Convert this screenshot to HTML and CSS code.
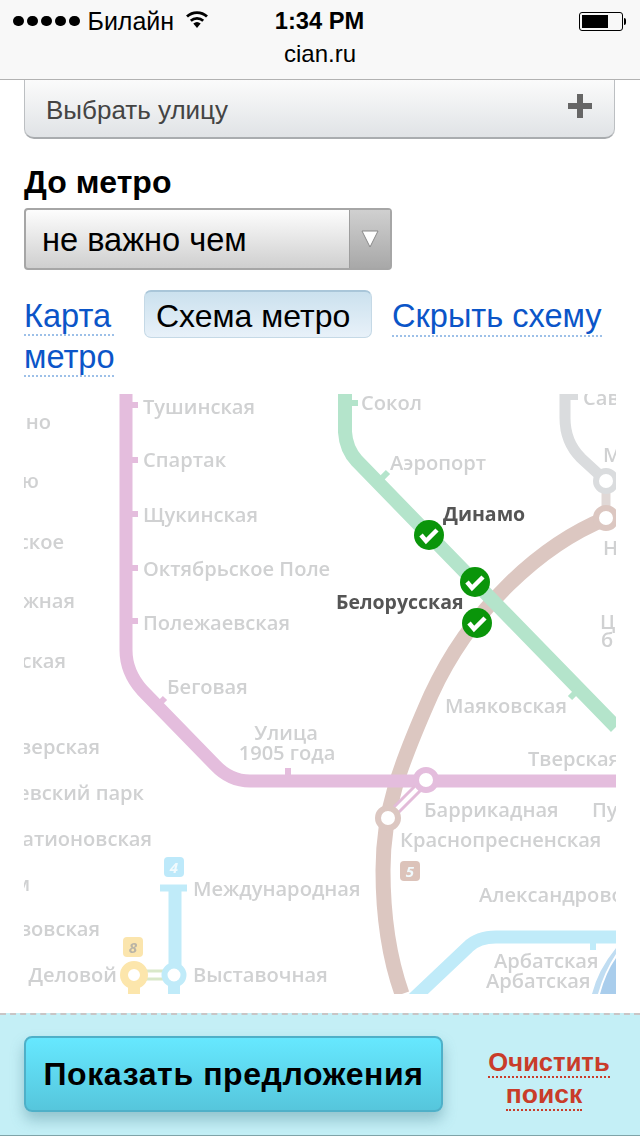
FILE: index.html
```html
<!DOCTYPE html>
<html lang="ru">
<head>
<meta charset="utf-8">
<title>cian.ru</title>
<link rel="stylesheet" href="styles.css">
</head>
<body>
<header class="browser">
  <div class="status">
    <div class="status-left">
      <span class="dots"><i></i><i></i><i></i><i></i><i></i></span>
      <span class="carrier">Билайн</span>
      <svg class="wifi" viewBox="0 0 24 18" width="24" height="18"><path d="M12 18 L8.3 13.6 A5.6 5.6 0 0 1 15.7 13.6Z" fill="#000"/><path d="M5.8 10.8 A9.4 9.4 0 0 1 18.2 10.8" fill="none" stroke="#000" stroke-width="2.8"/><path d="M2 6.6 A14.6 14.6 0 0 1 22 6.6" fill="none" stroke="#000" stroke-width="2.8"/></svg>
    </div>
    <div class="clock">1:34 PM</div>
    <div class="status-right">
      <span class="battery"><span class="battery-level"></span></span><span class="battery-nub"></span>
    </div>
  </div>
  <div class="domain">cian.ru</div>
</header>

<main class="content">
  <button class="street"><span class="street-text">Выбрать улицу</span>
    <svg class="plus" viewBox="0 0 24 24" width="24" height="24"><path d="M9 0h6v9h9v6h-9v9H9v-9H0V9h9z" fill="#666"/></svg>
  </button>

  <h2 class="label">До метро</h2>
  <div class="select">
    <span class="select-value">не важно чем</span>
    <span class="select-arrow"><svg viewBox="0 0 18 18" width="18" height="18"><path d="M1 1h16L9 17z" fill="#fff" stroke="#8a8a8a" stroke-width="1"/></svg></span>
  </div>

  <nav class="tabs">
    <a class="tab tab-map"><span class="dotted-line">Карта</span> <span class="dotted-line">метро</span></a>
    <span class="chip">Схема метро</span>
    <a class="tab tab-hide"><span class="dotted">Скрыть схему</span></a>
  </nav>

  <div class="map">
    <svg class="map-svg" viewBox="24 394 592 600" width="592" height="600">
      <g class="soft">
        <path class="ln brown" d="M607 518C540 545 470 610 431 695C400 765 383 810 383 870C383 920 390 960 402 994"/>
        <path class="ln pink" d="M126 394V650Q126 672 142 690L215 765Q230 781 250 781H616"/>
        <path class="tk pink" d="M126 405H138M126 460H138M126 514H138M126 568H138M126 621H138M155 708L165 698M288 781V768"/>
        <path class="ln green" d="M345 394V432Q346 449 357 461L616 727"/>
        <path class="tk green" d="M345 403H358M378 482L388 472M570 698L580 688"/>
        <path class="ln grey" d="M565 394V418Q565 442 581 458L606 481"/>
        <path class="tk grey" d="M565 397H578"/>
        <path class="ln sky" d="M412 1000L468 947Q478 937 496 937H616"/>
        <path class="tk sky" d="M593 937V950"/>
        <path class="ln sky" d="M175 888V965"/>
        <path class="tk sky thick" d="M160 888H187"/>
        <path class="arbat" d="M600 994Q606 972 616 958V994Z"/>
        <path class="arbat-light" d="M592 994Q598 970 616 948V954Q604 972 598 994Z"/>
        <path class="link-pale" d="M135 975H174"/>
        <path class="link-white" d="M135 975H174"/>
        <circle class="ring yellow" cx="134" cy="975" r="10"/>
        <path class="tail yellow" d="M134 985V994"/>
        <circle class="ring sky-ring" cx="174" cy="975" r="9.5"/>
        <path class="tail sky-tail" d="M174 985V994"/>
        <path class="link-grey" d="M606 481V518"/>
        <circle class="ring grey-ring" cx="606" cy="481" r="10"/>
        <circle class="ring brown-ring" cx="606" cy="518" r="10"/>
        <path class="link-brown" d="M426 780L388 818"/>
        <path class="link-white2" d="M426 780L388 818"/>
        <circle class="ring pink-ring" cx="426" cy="780" r="10"/>
        <circle class="ring brown-ring" cx="388" cy="818" r="10"/>
        <rect class="badge sky-f" x="164" y="857" width="20" height="20" rx="4"/>
        <rect class="badge yellow-f" x="123" y="937" width="20" height="20" rx="4"/>
        <rect class="badge brown-f" x="400" y="861" width="20" height="20" rx="4"/>
        <text class="num" x="174" y="873">4</text>
        <text class="num num-dark" x="133" y="953">8</text>
        <text class="num" x="410" y="877">5</text>

        <text class="st" x="143" y="414">Тушинская</text>
        <text class="st" x="143" y="467">Спартак</text>
        <text class="st" x="143" y="522">Щукинская</text>
        <text class="st" x="143" y="576">Октябрьское Поле</text>
        <text class="st" x="143" y="630">Полежаевская</text>
        <text class="st" x="167" y="694">Беговая</text>
        <text class="st mid" x="286" y="740">Улица</text>
        <text class="st mid" x="287" y="760">1905 года</text>
        <text class="st" x="361" y="410">Сокол</text>
        <text class="st" x="390" y="470">Аэропорт</text>
        <text class="st" x="583" y="405">Сав</text>
        <text class="st" x="603" y="462">М</text>
        <text class="st" x="603" y="555">Н</text>
        <text class="st" x="600" y="629">Ц</text>
        <text class="st" x="601" y="647">б</text>
        <text class="st" x="445" y="713">Маяковская</text>
        <text class="st" x="528" y="766">Тверская</text>
        <text class="st" x="424" y="817">Баррикадная</text>
        <text class="st" x="592" y="817">Пу</text>
        <text class="st" x="400" y="847">Краснопресненская</text>
        <text class="st" x="193" y="896">Международная</text>
        <text class="st" x="193" y="982">Выставочная</text>
        <text class="st" x="479" y="902">Александрово</text>
        <text class="st" x="494" y="968">Арбатская</text>
        <text class="st" x="486" y="988">Арбатская</text>
        <text class="st end" x="117" y="982">Деловой</text>
        <text class="st end" x="51" y="429">но</text>
        <text class="st end" x="39" y="488">ю</text>
        <text class="st end" x="64" y="549">ское</text>
        <text class="st end" x="75" y="608">жная</text>
        <text class="st end" x="66" y="668">ская</text>
        <text class="st end" x="100" y="754">верская</text>
        <text class="st end" x="144" y="800">евский парк</text>
        <text class="st end" x="152" y="846">атионовская</text>
        <text class="st end" x="30" y="891">м</text>
        <text class="st end" x="100" y="936">зовская</text>
        <text class="st-on" x="443" y="521">Динамо</text>
        <text class="st-on" x="336" y="609">Белорусская</text>
      </g>
      <g class="check" transform="translate(429 535)"><circle r="15"/><path d="M-8 0L-3 6L8-5"/></g>
      <g class="check" transform="translate(475 582)"><circle r="15"/><path d="M-8 0L-3 6L8-5"/></g>
      <g class="check" transform="translate(477 623)"><circle r="15"/><path d="M-8 0L-3 6L8-5"/></g>
    </svg>
  </div>
</main>

<footer class="bar">
  <button class="show">Показать предложения</button>
  <a class="clear"><span class="clear-line">Очистить</span> <span class="clear-line clear-second">поиск</span></a>
</footer>
</body>
</html>
```

FILE: styles.css
```css
* { box-sizing: border-box; }
html, body { margin: 0; padding: 0; }
body {
  width: 640px;
  height: 1136px;
  overflow: hidden;
  background: #fff;
  color: #000;
  font-family: "Liberation Sans", Arial, sans-serif;
  display: flex;
  flex-direction: column;
}

/* browser chrome */
.browser {
  height: 80px;
  flex: none;
  background: #f8f8f8;
  border-bottom: 1px solid #b2b2b2;
  position: relative;
  z-index: 1;
}
.status {
  display: grid;
  grid-template-columns: 1fr auto 1fr;
  align-items: center;
  height: 42px;
  padding: 0 14px 0 13px;
  font-size: 25px;
}
.status-left { display: flex; align-items: center; }
.dots { display: flex; gap: 3.5px; }
.dots i { width: 10.5px; height: 10.5px; border-radius: 50%; background: #000; display: block; }
.carrier { margin-left: 8px; }
.wifi { margin-left: 11px; margin-top: -4px; }
.clock { font-weight: 700; font-size: 23.7px; }
.status-right { display: flex; justify-content: flex-end; align-items: center; }
.battery {
  width: 44px;
  height: 19px;
  border: 1px solid #000;
  border-radius: 3px;
  padding: 2px;
  display: block;
}
.battery-level { display: block; width: 26px; height: 100%; background: #000; }
.battery-nub { width: 2px; height: 7px; background: #000; margin-left: 1px; border-radius: 0 2px 2px 0; }
.domain { text-align: center; font-size: 24px; line-height: 24px; margin-top: 0; }

/* page */
.content { flex: 1; min-height: 0; padding: 0 24px; }
.street {
  width: 591px;
  height: 60px;
  margin: -1px 0 0;
  padding: 0 22px 0 21px;
  display: flex;
  justify-content: space-between;
  align-items: center;
  border: 1px solid #bcbfc2;
  border-bottom: 2px solid #a9acaf;
  border-radius: 0 0 10px 10px;
  background: linear-gradient(#fbfbfb, #e0e3e6);
  color: #444;
  font: 26px "Liberation Sans", Arial, sans-serif;
}
.street-text { padding-top: 3px; }
.plus { margin-top: -6px; }
.label { margin: 25px 0 0; font-size: 32px; line-height: 36px; font-weight: 700; }
.select {
  width: 368px;
  height: 62px;
  margin-top: 8px;
  display: flex;
  border: 2px solid #a6a6a6;
  border-radius: 4px;
  background: linear-gradient(#fdfdfd, #cfcfcf);
}
.select-value { flex: 1; padding-left: 16px; font-size: 32.6px; line-height: 60px; }
.select-arrow {
  width: 41px;
  display: flex;
  align-items: flex-start;
  justify-content: center;
  padding-top: 20px;
  border-left: 1px solid #9e9e9e;
  background: linear-gradient(#d0d0d0, #a8a8a8);
}
.tabs { display: flex; align-items: flex-start; margin-top: 20px; font-size: 32px; line-height: 41px; }
.tab { color: #0b55c8; display: block; font-size: 32.6px; }
.tab-map { width: 90px; margin-top: 7px; }
.tab-hide { margin-left: 20px; margin-top: 5px; white-space: nowrap; }
.dotted { border-bottom: 2px dotted #9dc0e8; padding-bottom: 1px; }
.dotted-line { display: block; line-height: 37px; border-bottom: 2px dotted #9dc0e8; margin-bottom: 2px; }
.chip {
  margin-left: 30px;
  width: 228px;
  height: 48px;
  padding-left: 11px;
  line-height: 49px;
  border: 1px solid #c5d9e6;
  border-top: 2px solid #a9c6d9;
  border-radius: 7px;
  background: linear-gradient(#cbe1ee, #e8f1f9);
}

/* map */
.map { margin-top: 15px; width: 592px; height: 600px; overflow: hidden; }
.map-svg { display: block; }
.soft { filter: blur(0.6px); }
.ln { fill: none; stroke-width: 13; }
.tk { fill: none; stroke-width: 6; }
.thick { stroke-width: 7; }
.pink { stroke: #e4bddd; }
.green { stroke: #b4e4cb; stroke-width: 14; }
.tk.green { stroke-width: 6; }
.brown { stroke: #dcc7c1; stroke-width: 15; }
.grey { stroke: #dadcde; stroke-width: 11; }
.tk.grey { stroke-width: 6; }
.sky { stroke: #c0ebf9; }
.arbat { fill: #a9cdec; }
.arbat-light { fill: #c0ddf2; }
.link-pale { stroke: #d9e8c9; stroke-width: 11; }
.link-white { stroke: #fff; stroke-width: 5; }
.link-grey { stroke: #e0d8d6; stroke-width: 9; }
.link-brown { stroke: #e3bcd9; stroke-width: 10; }
.link-white2 { stroke: #fff; stroke-width: 4; }
.ring { fill: #fff; stroke-width: 6; }
.yellow { stroke: #fce6ac; stroke-width: 8; fill: #fff; }
.tail { fill: none; }
.tail.yellow { stroke-width: 12; fill: none; }
.sky-ring { stroke: #c0ebf9; }
.sky-tail { stroke: #c0ebf9; stroke-width: 12; }
.grey-ring { stroke: #dadcde; }
.brown-ring { stroke: #dcc7c1; }
.pink-ring { stroke: #e4bddd; }
.sky-f { fill: #bde9fa; }
.yellow-f { fill: #fbe5ad; }
.brown-f { fill: #dcc3ba; }
.num { font: italic 700 15px "Open Sans", sans-serif; fill: #f1fafd; text-anchor: middle; }
.num-dark { fill: #b9b4a6; }
.st { font: 600 20.1px "Open Sans", "Noto Sans", sans-serif; fill: #d0d1d2; }
.mid { text-anchor: middle; }
.end { text-anchor: end; }
.st-on { font: 700 19.5px "Open Sans", "Noto Sans", sans-serif; fill: #555; }
.check circle { fill: #0a950a; }
.check path { fill: none; stroke: #fff; stroke-width: 4.5; }

/* bottom bar */
.bar {
  flex: none;
  height: 123px;
  padding: 21px 0 0 24px;
  display: flex;
  align-items: flex-start;
  background: #c4eff6;
  border-top: 2px dashed #c9c5c5;
  border-bottom: 1px solid #7fa3a8;
}
.show {
  width: 419px;
  height: 76px;
  padding: 0;
  border: 2px solid #4fb0c8;
  border-radius: 8px;
  background: linear-gradient(#66e8ff, #56c6dc);
  box-shadow: 0 8px 14px rgba(70, 130, 145, 0.4);
  color: #000;
  font: 700 32px "Liberation Sans", Arial, sans-serif;
  letter-spacing: 0.6px;
}
.clear {
  width: 166px;
  margin: 10px 0 0 23px;
  text-align: center;
  color: #c93c2a;
  font-size: 25.6px;
  font-weight: 700;
  line-height: 32px;
}
.clear-line { border-bottom: 2px dotted #c93c2a; }
.clear-second { margin-right: 10px; font-size: 26.5px; }
```
